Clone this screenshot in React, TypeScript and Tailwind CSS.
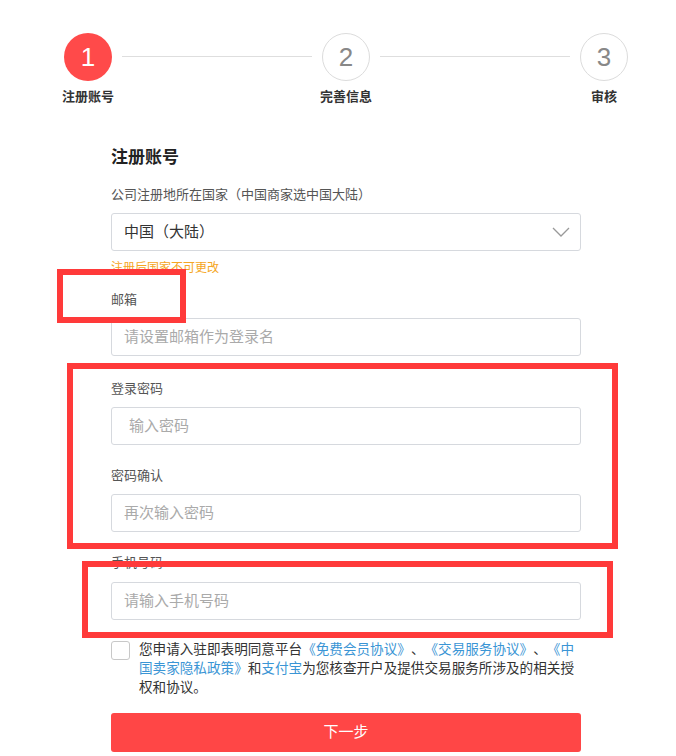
import React from 'react';

const font = { fontFamily: '"Liberation Sans", "Noto Sans CJK SC", sans-serif' };

function Step({ n, label, active }: { n: number; label: string; active?: boolean }) {
  return (
    <div className="flex w-12 flex-col items-center">
      <div
        className={
          active
            ? 'flex h-12 w-12 items-center justify-center rounded-full bg-[#ff4a4a] text-[26px] font-light text-white'
            : 'flex h-12 w-12 items-center justify-center rounded-full border border-[#dcdcdc] bg-white text-[26px] font-light text-[#888]'
        }
      >
        {n}
      </div>
      <div className="mt-[7px] whitespace-nowrap text-[13px] leading-[18px] font-bold text-[#333]">{label}</div>
    </div>
  );
}

function Label({ children, className = '' }: { children: React.ReactNode; className?: string }) {
  return <div className={'text-[13px] leading-[18px] text-[#555] ' + className}>{children}</div>;
}

function Field({ placeholder, className = '' }: { placeholder: string; className?: string }) {
  return (
    <div
      className={
        'flex h-[38px] items-center rounded-[3px] border border-[#d6d9de] bg-white px-[12px] text-[15px] text-[#aaa] ' +
        className
      }
    >
      {placeholder}
    </div>
  );
}

export default function App() {
  return (
    <div className="relative h-[756px] w-[676px] overflow-hidden bg-white" style={font}>
      {/* 步骤条 */}
      <div className="flex items-start pl-[64px] pr-[48px] pt-[33px]">
        <Step n={1} label="注册账号" active />
        <div className="mx-[10px] mt-[23px] h-px flex-1 bg-[#dedede]" />
        <Step n={2} label="完善信息" />
        <div className="mx-[10px] mt-[23px] h-px flex-1 bg-[#dedede]" />
        <Step n={3} label="审核" />
      </div>

      {/* 表单 */}
      <div className="ml-[111px] w-[470px]">
        <div className="mt-[40px] text-[17px] leading-[24px] font-bold text-[#222]">注册账号</div>

        <Label className="mt-[16px]">公司注册地所在国家（中国商家选中国大陆）</Label>
        <div className="mt-[9px] flex h-[38px] items-center justify-between rounded-[3px] border border-[#d6d9de] pl-[12px] pr-[10px] text-[15px] text-[#333]">
          <span>中国（大陆）</span>
          <svg width="18" height="10" viewBox="0 0 18 10" fill="none">
            <path d="M1 1l8 8 8-8" stroke="#999" strokeWidth="1.3" />
          </svg>
        </div>
        <div className="mt-[9px] text-[12px] leading-[16px] text-[#f5a623]">注册后国家不可更改</div>

        <Label className="mt-[15px]">邮箱</Label>
        <Field className="mt-[9px]" placeholder="请设置邮箱作为登录名" />

        <Label className="mt-[24px]">登录密码</Label>
        <Field className="mt-[9px] pl-[17px]" placeholder="输入密码" />

        <Label className="mt-[22px]">密码确认</Label>
        <Field className="mt-[9px]" placeholder="再次输入密码" />

        <Label className="mt-[22px]">手机号码</Label>
        <Field className="mt-[10px]" placeholder="请输入手机号码" />

        <div className="mt-[20px] flex items-start gap-[9px]">
          <div className="mt-[1px] h-[19px] w-[19px] shrink-0 rounded-[3px] border border-[#c8c8c8] bg-white" />
          <p className="text-[13.6px] leading-[19px] text-[#333] [text-spacing-trim:space-all]">
            您申请入驻即表明同意平台<span className="text-[#3a95d5]">《免费会员协议》</span>、<span className="text-[#3a95d5]">《交易服务协议》</span>、<span className="text-[#3a95d5]">《中
            <br />
            国卖家隐私政策》</span>和<span className="text-[#3a95d5]">支付宝</span>为您核查开户及提供交易服务所涉及的相关授
            <br />
            权和协议。
          </p>
        </div>

        <button className="mt-[16px] flex h-[39px] w-full items-center justify-center rounded-[3px] bg-[#ff4646] text-[15px] text-white">
          下一步
        </button>
      </div>

      {/* 标注框 */}
      <div className="pointer-events-none absolute left-[57px] top-[269px] h-[54px] w-[129px] border-[6px] border-[#ff3a3a]" />
      <div className="pointer-events-none absolute left-[67px] top-[363px] h-[186px] w-[551px] border-[6px] border-[#ff3a3a]" />
      <div className="pointer-events-none absolute left-[82px] top-[561px] h-[77px] w-[531px] border-[6px] border-[#ff3a3a]" />
    </div>
  );
}
